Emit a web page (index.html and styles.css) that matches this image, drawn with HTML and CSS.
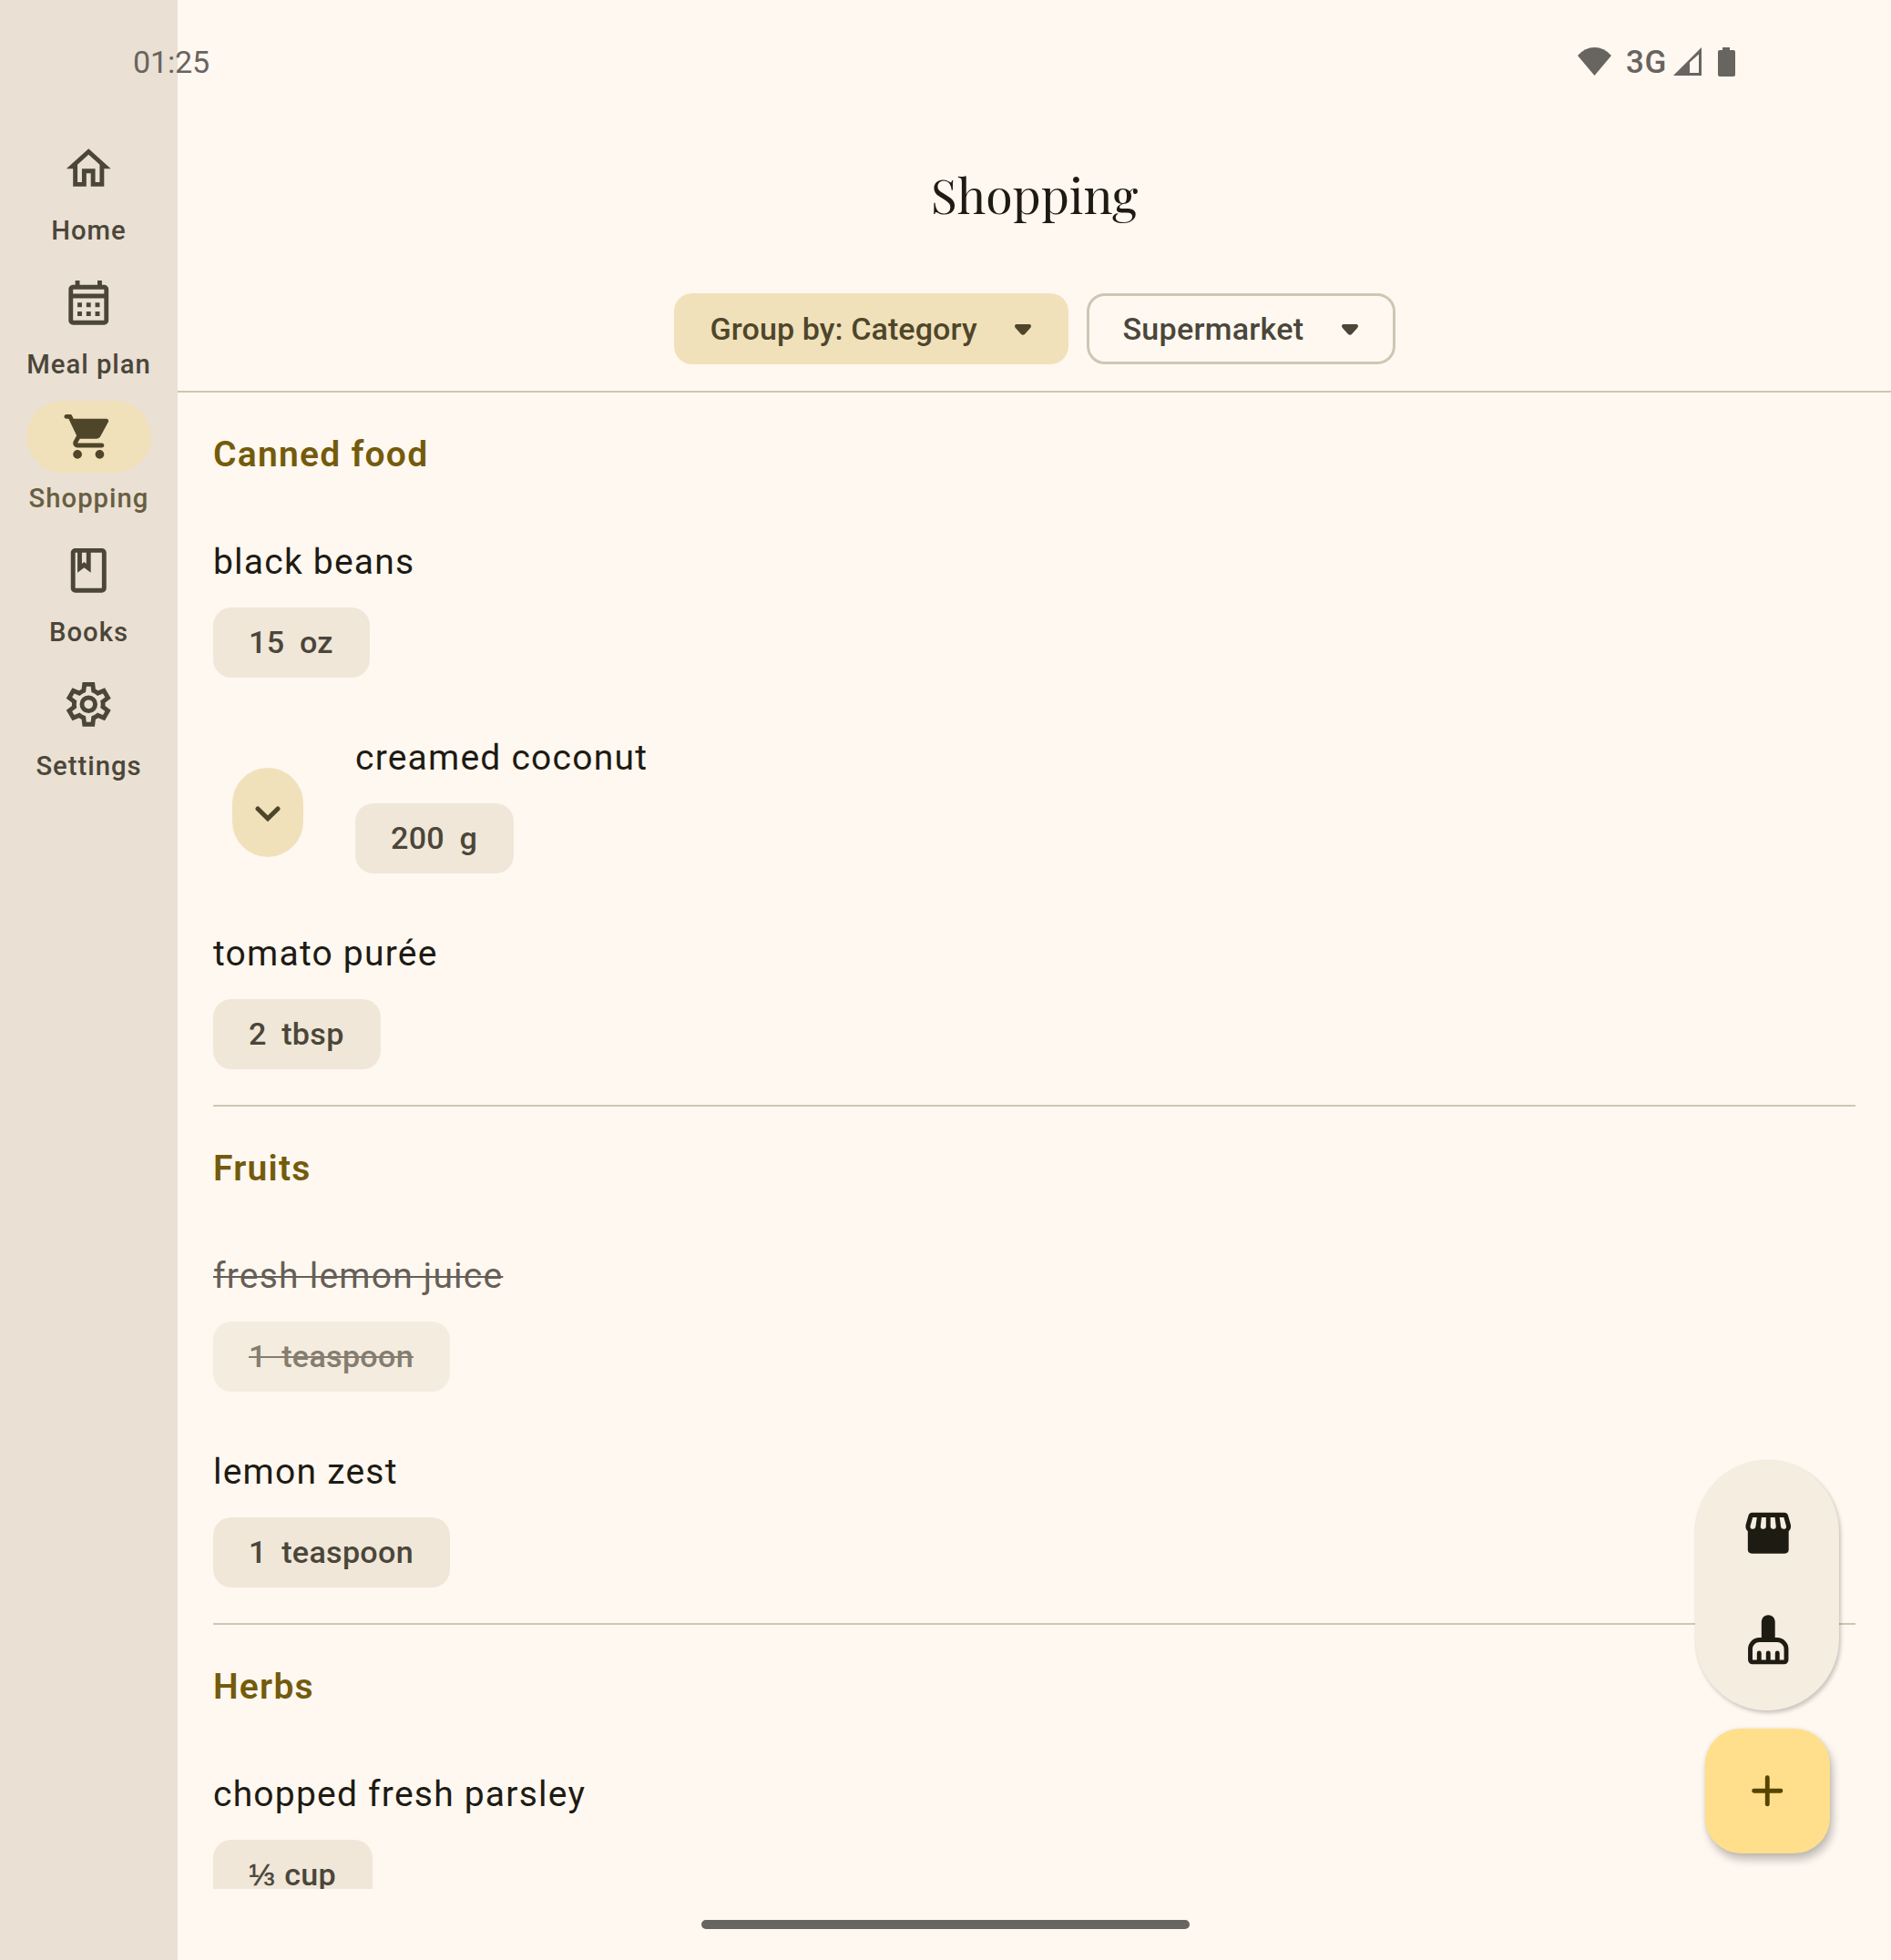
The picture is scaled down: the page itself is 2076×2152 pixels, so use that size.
FILE: index.html
```html
<!DOCTYPE html>
<html lang="en">
<head>
<meta charset="utf-8">
<title>Shopping</title>
<link rel="stylesheet" href="styles.css">
</head>
<body>
<div class="app">
  <nav class="rail">
    <a class="rail-item">
      <span class="rail-pill"><svg class="icon" viewBox="0 0 24 24"><path d="M12 5.69l5 4.5V18h-2v-6H9v6H7v-7.81l5-4.5M12 3L2 12h3v8h6v-6h2v6h6v-8h3L12 3z"/></svg></span>
      <span class="rail-label">Home</span>
    </a>
    <a class="rail-item">
      <span class="rail-pill"><svg class="icon" viewBox="0 0 24 24"><path d="M19 4h-1V2h-2v2H8V2H6v2H5c-1.11 0-1.99.9-1.99 2L3 20c0 1.1.89 2 2 2h14c1.1 0 2-.9 2-2V6c0-1.1-.9-2-2-2zm0 16H5V10h14v10zm0-12H5V6h14v2zM9 14H7v-2h2v2zm4 0h-2v-2h2v2zm4 0h-2v-2h2v2zm-8 4H7v-2h2v2zm4 0h-2v-2h2v2zm4 0h-2v-2h2v2z"/></svg></span>
      <span class="rail-label">Meal plan</span>
    </a>
    <a class="rail-item active">
      <span class="rail-pill"><svg class="icon" viewBox="0 0 24 24"><path d="M7 18c-1.1 0-1.99.9-1.99 2S5.900 22 7 22s2-.9 2-2-.9-2-2-2zM1 3c0 .55.45 1 1 1h1l3.600 7.590-1.350 2.440C4.520 15.370 5.480 17 7 17h11c.55 0 1-.45 1-1s-.45-1-1-1H7l1.100-2h7.450c.75 0 1.410-.41 1.750-1.030l3.580-6.490c.37-.66-.11-1.480-.87-1.480H5.210l-.67-1.430c-.16-.35-.52-.57-.9-.57H2c-.55 0-1 .45-1 1zm16 15c-1.100 0-1.990.9-1.990 2s.89 2 1.990 2 2-.9 2-2-.9-2-2-2z"/></svg></span>
      <span class="rail-label">Shopping</span>
    </a>
    <a class="rail-item">
      <span class="rail-pill"><svg class="icon" viewBox="0 0 24 24"><path d="M18 2H6c-1.1 0-2 .9-2 2v16c0 1.1.9 2 2 2h12c1.1 0 2-.9 2-2V4c0-1.1-.9-2-2-2zM9 4h2v5l-1-.75L9 9V4zm9 16H6V4h1v9l3-2.25L13 13V4h5v16z"/></svg></span>
      <span class="rail-label">Books</span>
    </a>
    <a class="rail-item">
      <span class="rail-pill"><svg class="icon" viewBox="0 -960 960 960"><path d="m370-80-16-128q-13-5-24.500-12T307-235l-119 50L78-375l103-78q-1-7-1-13.500v-27q0-6.500 1-13.500L78-585l110-190 119 50q11-8 23-15t24-12l16-128h220l16 128q13 5 24.500 12t22.500 15l119-50 110 190-103 78q1 7 1 13.500v27q0 6.500-2 13.500l103 78-110 190-118-50q-11 8-23 15t-24 12L590-80H370Zm70-80h79l14-106q31-8 57.500-23.500T639-327l99 41 39-68-86-65q5-14 7-29.500t2-31.500q0-16-2-31.500t-7-29.500l86-65-39-68-99 42q-22-23-48.500-38.500T533-694l-13-106h-79l-14 106q-31 8-57.500 23.500T321-633l-99-41-39 68 86 64q-5 15-7 30t-2 32q0 16 2 31t7 30l-86 65 39 68 99-42q22 23 48.500 38.500T427-266l13 106Z"/><circle class="ring" cx="480" cy="-480" r="120"/></svg></span>
      <span class="rail-label">Settings</span>
    </a>
  </nav>

  <main class="main">
    <header class="header">
      <h1 class="title">Shopping</h1>
      <div class="filters">
        <button class="filter filled">Group by: Category
          <svg class="caret" viewBox="0 0 20 12"><path d="M3 0h14q2 0 2 2 0 1-.8 1.900l-6 6.800q-2.200 2.200-4.400 0l-6-6.800Q1 3 1 2q0-2 2-2z"/></svg>
        </button>
        <button class="filter outlined">Supermarket
          <svg class="caret" viewBox="0 0 20 12"><path d="M3 0h14q2 0 2 2 0 1-.8 1.900l-6 6.800q-2.200 2.200-4.400 0l-6-6.800Q1 3 1 2q0-2 2-2z"/></svg>
        </button>
      </div>
    </header>

    <div class="list">
      <section class="group">
        <h2 class="group-title">Canned food</h2>
        <div class="item"><div class="item-body"><p class="name">black beans</p><span class="qty">15  oz</span></div></div>
        <div class="item">
          <button class="expand" aria-label="Expand"><svg class="chevron" viewBox="0 0 28 17"><path d="M3 3l11 10.800L25 3"/></svg></button>
          <div class="item-body"><p class="name">creamed coconut</p><span class="qty">200  g</span></div>
        </div>
        <div class="item"><div class="item-body"><p class="name">tomato purée</p><span class="qty">2  tbsp</span></div></div>
      </section>
      <section class="group">
        <h2 class="group-title">Fruits</h2>
        <div class="item done"><div class="item-body"><p class="name">fresh lemon juice</p><span class="qty">1  teaspoon</span></div></div>
        <div class="item"><div class="item-body"><p class="name">lemon zest</p><span class="qty">1  teaspoon</span></div></div>
      </section>
      <section class="group">
        <h2 class="group-title">Herbs</h2>
        <div class="item"><div class="item-body"><p class="name">chopped fresh parsley</p><span class="qty"><span class="fraction">⅓</span> cup</span></div></div>
      </section>
    </div>
  </main>

  <div class="status">
    <span class="clock">01:25</span>
    <div class="status-icons">
      <svg class="wifi" viewBox="0 0 37 31"><path d="M18.500 31L0 9Q8 0 18.500 0T37 9z"/></svg>
      <span class="network">3G</span>
      <svg class="signal" viewBox="0 0 31 31"><path fill-rule="evenodd" d="M0 31L31 0V31zM18 16.500V28H28V7.500z"/></svg>
      <svg class="battery" viewBox="0 0 19 32"><path d="M5 0h8v3h4q2 0 2 2v25q0 2-2 2H2q-2 0-2-2V5q0-2 2-2h3z"/></svg>
    </div>
  </div>

  <div class="actions">
    <div class="toolbar">
      <button class="tool" aria-label="Store"><svg class="icon" viewBox="0 0 24 24"><path d="M4.800 2.800h14.400q1.300 0 1.700 1.200l1.200 4.200q.4 1.800-.9 3V19.400q0 1.800-1.800 1.800H4.600q-1.800 0-1.800-1.800V11.200q-1.300-1.200-.9-3l1.200-4.200q.4-1.200 1.700-1.200z"/><path class="cutout" d="M5 4.900H6.900L6.300 9.200Q6.100 10.200 5.100 10.200 3.700 10.200 3.900 8.800zM9 4.900H11V9.200Q10.900 10.200 9.800 10.200 8.500 10.200 8.500 9zM13 4.900H15L15.500 9Q15.500 10.200 14.200 10.200 13.100 10.200 13 9.200zM17.100 4.900H19L20.100 8.800Q20.300 10.200 18.900 10.200 17.900 10.200 17.700 9.200z"/></svg></button>
      <button class="tool" aria-label="Clean"><svg class="icon" viewBox="0 0 24 24"><path d="M8.950 12V3.950a3.050 3.050 0 0 1 6.100 0V12z"/><path class="line" d="M8 12.100h8a4.100 4.100 0 0 1 4.100 4.100V21.100a1 1 0 0 1-1 1H4.900a1 1 0 0 1-1-1V16.200A4.100 4.100 0 0 1 8 12.100zM7.900 22V18M12 22V18M16.100 22V18"/></svg></button>
    </div>
    <button class="fab" aria-label="Add"><svg class="icon" viewBox="0 0 24 24"><path class="line" d="M12 6v12M6 12h12"/></svg></button>
  </div>
  <div class="gesture"></div>
</div>
</body>
</html>
```
FILE: styles.css
```css
* { box-sizing: border-box; }
body { margin: 0; background: #fff8f1; font-family: Roboto, sans-serif; color: #1e1b13; }
h1, h2, p { margin: 0; font-weight: 400; }
button { border: 0; padding: 0; margin: 0; background: none; font: inherit; color: inherit; }
svg { display: block; fill: currentColor; flex: none; }
.icon { width: 58.5px; height: 58.5px; }
.line { fill: none; stroke: currentColor; stroke-width: 2; stroke-linecap: round; stroke-linejoin: round; }

.app { position: relative; display: flex; width: 2076px; height: 2152px; overflow: hidden; }

.rail { width: 195px; background: #eae0d4; padding-top: 146px; display: flex; flex-direction: column; align-items: center; gap: 20px; color: #4b4639; }
.rail-item { display: flex; flex-direction: column; align-items: center; gap: 9px; height: 127px; }
.rail-pill { width: 137px; height: 79px; border-radius: 40px; display: flex; align-items: center; justify-content: center; }
.rail-label { font-size: 29.25px; line-height: 38px; font-weight: 500; letter-spacing: 1px; white-space: nowrap; }
.active .rail-pill { background: #f0e1bb; color: #4f462a; }
.active .rail-label { color: #685e40; }
.ring { fill: none; stroke: currentColor; stroke-width: 80; }

.main { flex: 1; height: 2074px; display: flex; flex-direction: column; overflow: hidden; }
.header { height: 431px; padding-top: 173px; border-bottom: 2px solid #cec6b4; display: flex; flex-direction: column; align-items: center; flex: none; }
.title { font-family: "Playfair Display", "Liberation Serif", serif; font-size: 53.6px; line-height: 80px; height: 80px; }
.filters { display: flex; gap: 20px; margin-top: 69px; }
.filter { height: 78px; padding: 0 40px 0 40px; border-radius: 20px; display: flex; align-items: center; justify-content: space-between; font-size: 34.1px; font-weight: 500; letter-spacing: .08px; white-space: nowrap; }
.filled { width: 433px; background: #f0e1bb; color: #4f462a; }
.outlined { width: 339px; border: 3px solid #cec6b4; color: #4b4639; padding: 0 37px 0 37px; letter-spacing: .24px; }
.caret { width: 20px; height: 12px; margin-top: 2px; }

.list { padding: 0 39px; }
.group + .group { border-top: 2px solid #cec6b4; }
.group-title { height: 137px; padding-top: 39px; font-size: 39px; line-height: 58px; font-weight: 600; letter-spacing: 1.25px; color: #745b0c; }
.item { height: 215px; display: flex; }
.item-body { padding-top: 20px; display: flex; flex-direction: column; align-items: flex-start; gap: 21px; }
.name { font-size: 39px; line-height: 58px; letter-spacing: 1.22px; }
.qty { height: 77px; padding: 0 40px 0 39px; border-radius: 20px; background: #f0e7d9; color: #4b4639; font-size: 34.1px; line-height: 77px; font-weight: 500; letter-spacing: .3px; word-spacing: -.5px; white-space: pre; }
.fraction { letter-spacing: 2.5px; -webkit-text-stroke: .5px currentColor; }
.done .name { color: #665f57; text-decoration: line-through; text-decoration-thickness: 2px; }
.done .qty { background: #f4ecdf; color: #857d6f; text-decoration: line-through; text-decoration-thickness: 2px; }
.expand { width: 78px; height: 98px; margin: 60px 57px 0 21px; border-radius: 39px; background: #f0e1bb; color: #4f462a; display: flex; align-items: center; justify-content: center; }
.chevron { width: 28px; height: 17px; fill: none; stroke: currentColor; stroke-width: 5; stroke-linecap: round; margin-top: 3px; }

/* system bars drawn above the app */
.status { position: absolute; top: 48px; left: 146px; right: 171px; height: 40px; display: flex; justify-content: space-between; color: #68645f; font-size: 34.1px; line-height: 40px; }
.clock { letter-spacing: -.2px; }
.status-icons { display: flex; align-items: flex-start; }
.wifi { width: 37px; height: 31px; margin-top: 4px; }
.network { width: 43px; margin: 1px 9px 0 16px; font-size: 35px; font-weight: 500; letter-spacing: .5px; }
.signal { width: 31px; height: 31px; margin: 4px 18px 0 0; }
.battery { width: 19px; height: 32px; margin-top: 4px; }
.gesture { position: absolute; left: 770px; top: 2108px; width: 536px; height: 10px; border-radius: 5px; background: #68645f; }

/* floating controls over the list */
.actions { position: absolute; right: 57px; top: 1603px; display: flex; flex-direction: column; align-items: center; gap: 20px; }
.toolbar { width: 158px; height: 275px; padding-top: 22px; border-radius: 79px; background: #f4ede0; color: #1e1b13; box-shadow: 2px 3px 4px rgba(0, 0, 0, .2), 0 0 2px rgba(0, 0, 0, .06); display: flex; flex-direction: column; align-items: center; }
.tool { height: 117px; padding-left: 2px; display: flex; align-items: center; justify-content: center; }
.cutout { fill: #f4ede0; }
.fab { width: 137px; height: 137px; border-radius: 39px; background: #ffdf8b; color: #564500; box-shadow: 3px 7px 10px rgba(0, 0, 0, .24), 0 0 4px rgba(0, 0, 0, .08); display: flex; align-items: center; justify-content: center; }
```
